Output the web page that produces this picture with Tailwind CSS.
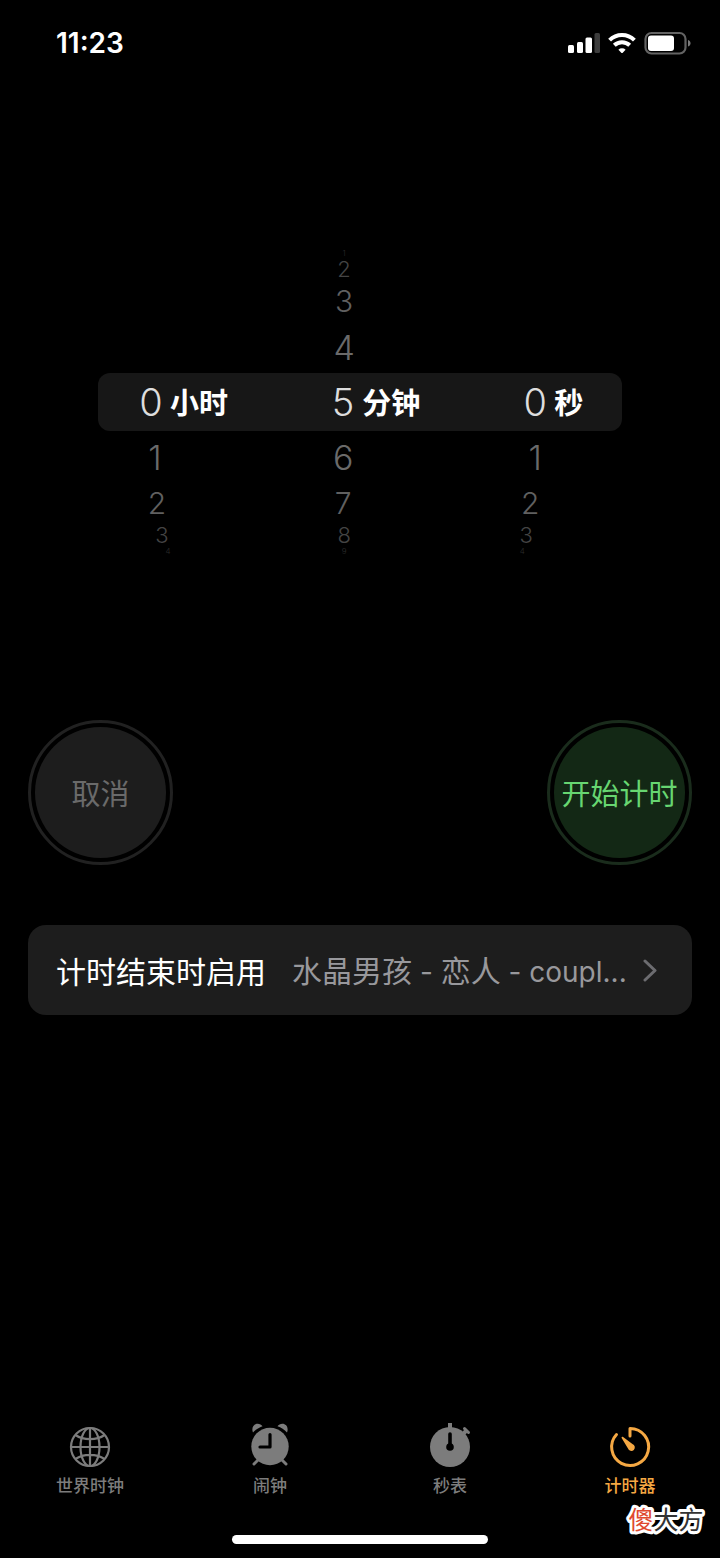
<!DOCTYPE html>
<html lang="zh-CN">
<head>
  <meta charset="UTF-8">
  <meta name="viewport" content="width=device-width, initial-scale=1.0">
  <title>计时器</title>
  <script src="https://cdn.jsdelivr.net/npm/@tailwindcss/browser@4"></script>
</head>
<body class="min-h-screen flex flex-col bg-black text-white font-['Inter','Noto_Sans_CJK_SC',sans-serif]">

  <!-- Status bar -->
  <header class="flex items-center justify-between h-[86px] pl-14 pr-7">
    <time class="text-[28px] font-semibold">11:23</time>
    <div class="flex items-center gap-2">
      <svg class="w-8 h-5" viewBox="0 0 32 20" fill="#fff">
        <rect x="0" y="12" width="6" height="8" rx="1.5"/>
        <rect x="9" y="9" width="6" height="11" rx="1.5"/>
        <rect x="17.5" y="4.5" width="6.5" height="15.5" rx="1.5"/>
        <rect x="26.5" y="0" width="5.5" height="20" rx="1.5" fill="#3c3c3c"/>
      </svg>
      <svg class="w-7 h-5" viewBox="0 0 28 20" fill="none" stroke="#fff" stroke-width="4">
        <path d="M1.6 7.2a17.5 17.5 0 0 1 24.8 0"/>
        <path d="M6.3 12.3a11 11 0 0 1 15.4 0"/>
        <path d="M14 20.500l-3.600-3.800a5.200 5.200 0 0 1 7.200 0z" fill="#fff" stroke="none"/>
      </svg>
      <svg class="w-[48px] h-[24px]" viewBox="0 0 48 24">
        <rect x="1.5" y="2" width="40" height="20.5" rx="6" fill="none" stroke="#636363" stroke-width="2.2"/>
        <rect x="4" y="4.5" width="26" height="15.5" rx="3" fill="#fff"/>
        <path d="M44 9c3.400 1 3.400 5.600 0 6.600z" fill="#7a7a7a"/>
      </svg>
    </div>
  </header>

  <main class="px-7">
    <!-- Hours / minutes / seconds wheel -->
    <section aria-label="时长" class="mt-[163px] mx-[70px] font-light text-[#6a6a6a]">
      <div class="grid grid-cols-[11fr_11fr_8fr] items-center h-2 text-[8px] leading-none text-[#2c2c2c]">
        <button class="col-start-2 w-6 ml-[42px]">1</button>
      </div>
      <div class="grid grid-cols-[11fr_11fr_8fr] items-center h-6 text-[22px] leading-none text-[#444]">
        <button class="col-start-2 w-6 ml-[42px]">2</button>
      </div>
      <div class="grid grid-cols-[11fr_11fr_8fr] items-center h-10 text-[30px] leading-none text-[#606060]">
        <button class="col-start-2 w-6 ml-[42px]">3</button>
      </div>
      <div class="grid grid-cols-[11fr_11fr_8fr] items-center h-[52px] text-[34px]">
        <button class="col-start-2 w-6 ml-[42px]">4</button>
      </div>

      <div class="grid grid-cols-[11fr_11fr_8fr] items-center h-[58px] rounded-xl bg-[#171717] text-white">
        <div class="flex items-center gap-[7px] pl-[41px]">
          <output class="flex justify-center w-6 text-[38px] text-[#ddd]">0</output>
          <span class="text-[29px] font-bold font-['Noto_Sans_CJK_SC',sans-serif]">小时</span>
        </div>
        <div class="flex items-center gap-[7px] pl-[41px]">
          <output class="flex justify-center w-6 text-[38px] text-[#ddd]">5</output>
          <span class="text-[29px] font-bold font-['Noto_Sans_CJK_SC',sans-serif]">分钟</span>
        </div>
        <div class="flex items-center gap-[7px] pl-[41px]">
          <output class="flex justify-center w-6 text-[38px] text-[#ddd]">0</output>
          <span class="text-[29px] font-bold font-['Noto_Sans_CJK_SC',sans-serif]">秒</span>
        </div>
      </div>

      <div class="grid grid-cols-[11fr_11fr_8fr] items-center h-[52px] text-[34px]">
        <button class="w-6 ml-[45px]">1</button>
        <button class="w-6 ml-[41px]">6</button>
        <button class="w-6 ml-[41px]">1</button>
      </div>
      <div class="grid grid-cols-[11fr_11fr_8fr] items-center h-10 text-[30px] leading-none text-[#606060]">
        <button class="w-6 ml-[47px]">2</button>
        <button class="w-6 ml-[41px]">7</button>
        <button class="w-6 ml-[36px]">2</button>
      </div>
      <div class="grid grid-cols-[11fr_11fr_8fr] items-center h-6 text-[22px] leading-none text-[#444]">
        <button class="w-6 ml-[52px]">3</button>
        <button class="w-6 ml-[42px]">8</button>
        <button class="w-6 ml-[32px]">3</button>
      </div>
      <div class="grid grid-cols-[11fr_11fr_8fr] items-center h-2 text-[8px] leading-none text-[#2c2c2c]">
        <button class="w-6 ml-[58px]">4</button>
        <button class="w-6 ml-[42px]">9</button>
        <button class="w-6 ml-[28px]">4</button>
      </div>
    </section>

    <!-- Actions -->
    <div class="flex justify-between mt-[165px] text-[29px] font-['Noto_Sans_CJK_SC',sans-serif]">
      <button class="size-[145px] p-1 rounded-full border-[3px] border-[#212121] text-[#6a6a6a]">
        <span class="flex items-center justify-center size-full rounded-full bg-[#1d1d1d]">取消</span>
      </button>
      <button class="size-[145px] p-1 rounded-full border-[3px] border-[#1a2c1c] text-[#67d671]">
        <span class="flex items-center justify-center size-full rounded-full bg-[#132815] whitespace-nowrap">开始计时</span>
      </button>
    </div>

    <a href="#sound" class="flex items-center h-[90px] mt-[60px] px-7 rounded-[18px] bg-[#1d1d1d] text-[30px] font-['Noto_Sans_CJK_SC',sans-serif]">
      <span class="shrink-0">计时结束时启用</span>
      <span class="flex-1 min-w-0 ml-[26px] whitespace-nowrap text-[#98989c]">水晶男孩<span class="text-[28px] font-['Inter',sans-serif]"> - </span>恋人<span class="text-[28px] font-['Inter',sans-serif]"> - coupl...</span></span>
      <svg class="w-4 h-6 mr-1.5" viewBox="0 0 16 24" fill="none" stroke="#6c6c70" stroke-width="3" stroke-linecap="round" stroke-linejoin="round">
        <path d="M3 3l10 9.5-10 9.5"/>
      </svg>
    </a>
  </main>

  <!-- Tab bar -->
  <nav class="grid grid-cols-4 mt-auto text-[17px] leading-6 font-medium text-[#7c7c7c]">
    <a href="#world" class="flex flex-col items-center gap-1">
      <svg class="size-12" viewBox="0 0 48 48" fill="none" stroke="currentColor" stroke-width="2.2">
        <circle cx="24" cy="25" r="19"/>
        <ellipse cx="24" cy="25" rx="9.5" ry="19"/>
        <path d="M24 6v38M5 25h38M9.5 13c8 5.5 21 5.5 29 0M9.5 37c8-5.5 21-5.5 29 0"/>
      </svg>
      世界时钟
    </a>
    <a href="#alarm" class="flex flex-col items-center gap-1">
      <svg class="size-12" viewBox="0 0 48 48" fill="currentColor">
        <circle cx="24" cy="24.5" r="18.7"/>
        <path d="M7 10.5C5 5.5 8 1.800 11.500 1.800c2.200 0 4 1 5 2.500-3.500 1.200-7 3.500-9.500 6.200zM41 10.500c2-5-1-8.700-4.500-8.700-2.200 0-4 1-5 2.500 3.500 1.200 7 3.500 9.500 6.200z"/>
        <path d="M12 38l-4 4M36 38l4 4" stroke="currentColor" stroke-width="3" stroke-linecap="round"/>
        <path d="M24 12.5V25H14" fill="none" stroke="#000" stroke-width="3.2" stroke-linecap="round" stroke-linejoin="round"/>
      </svg>
      闹钟
    </a>
    <a href="#stopwatch" class="flex flex-col items-center gap-1">
      <svg class="size-12" viewBox="0 0 48 48" fill="currentColor">
        <circle cx="24" cy="25" r="20"/>
        <path d="M24 8V1M37 12l4-4" stroke="currentColor" stroke-width="4"/>
        <path d="M38.5 6.5l4 4" stroke="currentColor" stroke-width="3" stroke-linecap="round"/>
        <path d="M24 12v12" stroke="#000" stroke-width="3.6" stroke-linecap="round"/>
        <circle cx="24" cy="25" r="3.8" fill="#000"/>
      </svg>
      秒表
    </a>
    <a href="#timer" aria-current="page" class="flex flex-col items-center gap-1 text-[#f5a843]">
      <svg class="size-12" viewBox="0 0 48 48" fill="none" stroke="currentColor" stroke-width="3" stroke-linecap="round" stroke-linejoin="round">
        <path d="M10.5 12.5A18.5 18.5 0 1 0 24 6.500V14"/>
        <path d="M15.800 16.200c-.7-1 .2-2 1.300-1.300l9.300 7.200a3.500 3.500 0 1 1-4.400 4.400z" fill="currentColor" stroke="none"/>
      </svg>
      计时器
    </a>
  </nav>

  <footer class="flex justify-center pt-[37px] pb-3.5">
    <div class="w-64 h-[9px] rounded-full bg-white"></div>
  </footer>

  <svg class="absolute right-3 bottom-4 w-[84px] h-12 text-[25px] font-['Noto_Sans_CJK_SC',sans-serif]" viewBox="0 0 84 48">
    <text x="42" y="35" text-anchor="middle" fill="#333" stroke="#fff" stroke-width="6" stroke-linejoin="round" paint-order="stroke"><tspan fill="#e0492f">傻</tspan>大方</text>
  </svg>
</body>
</html>
